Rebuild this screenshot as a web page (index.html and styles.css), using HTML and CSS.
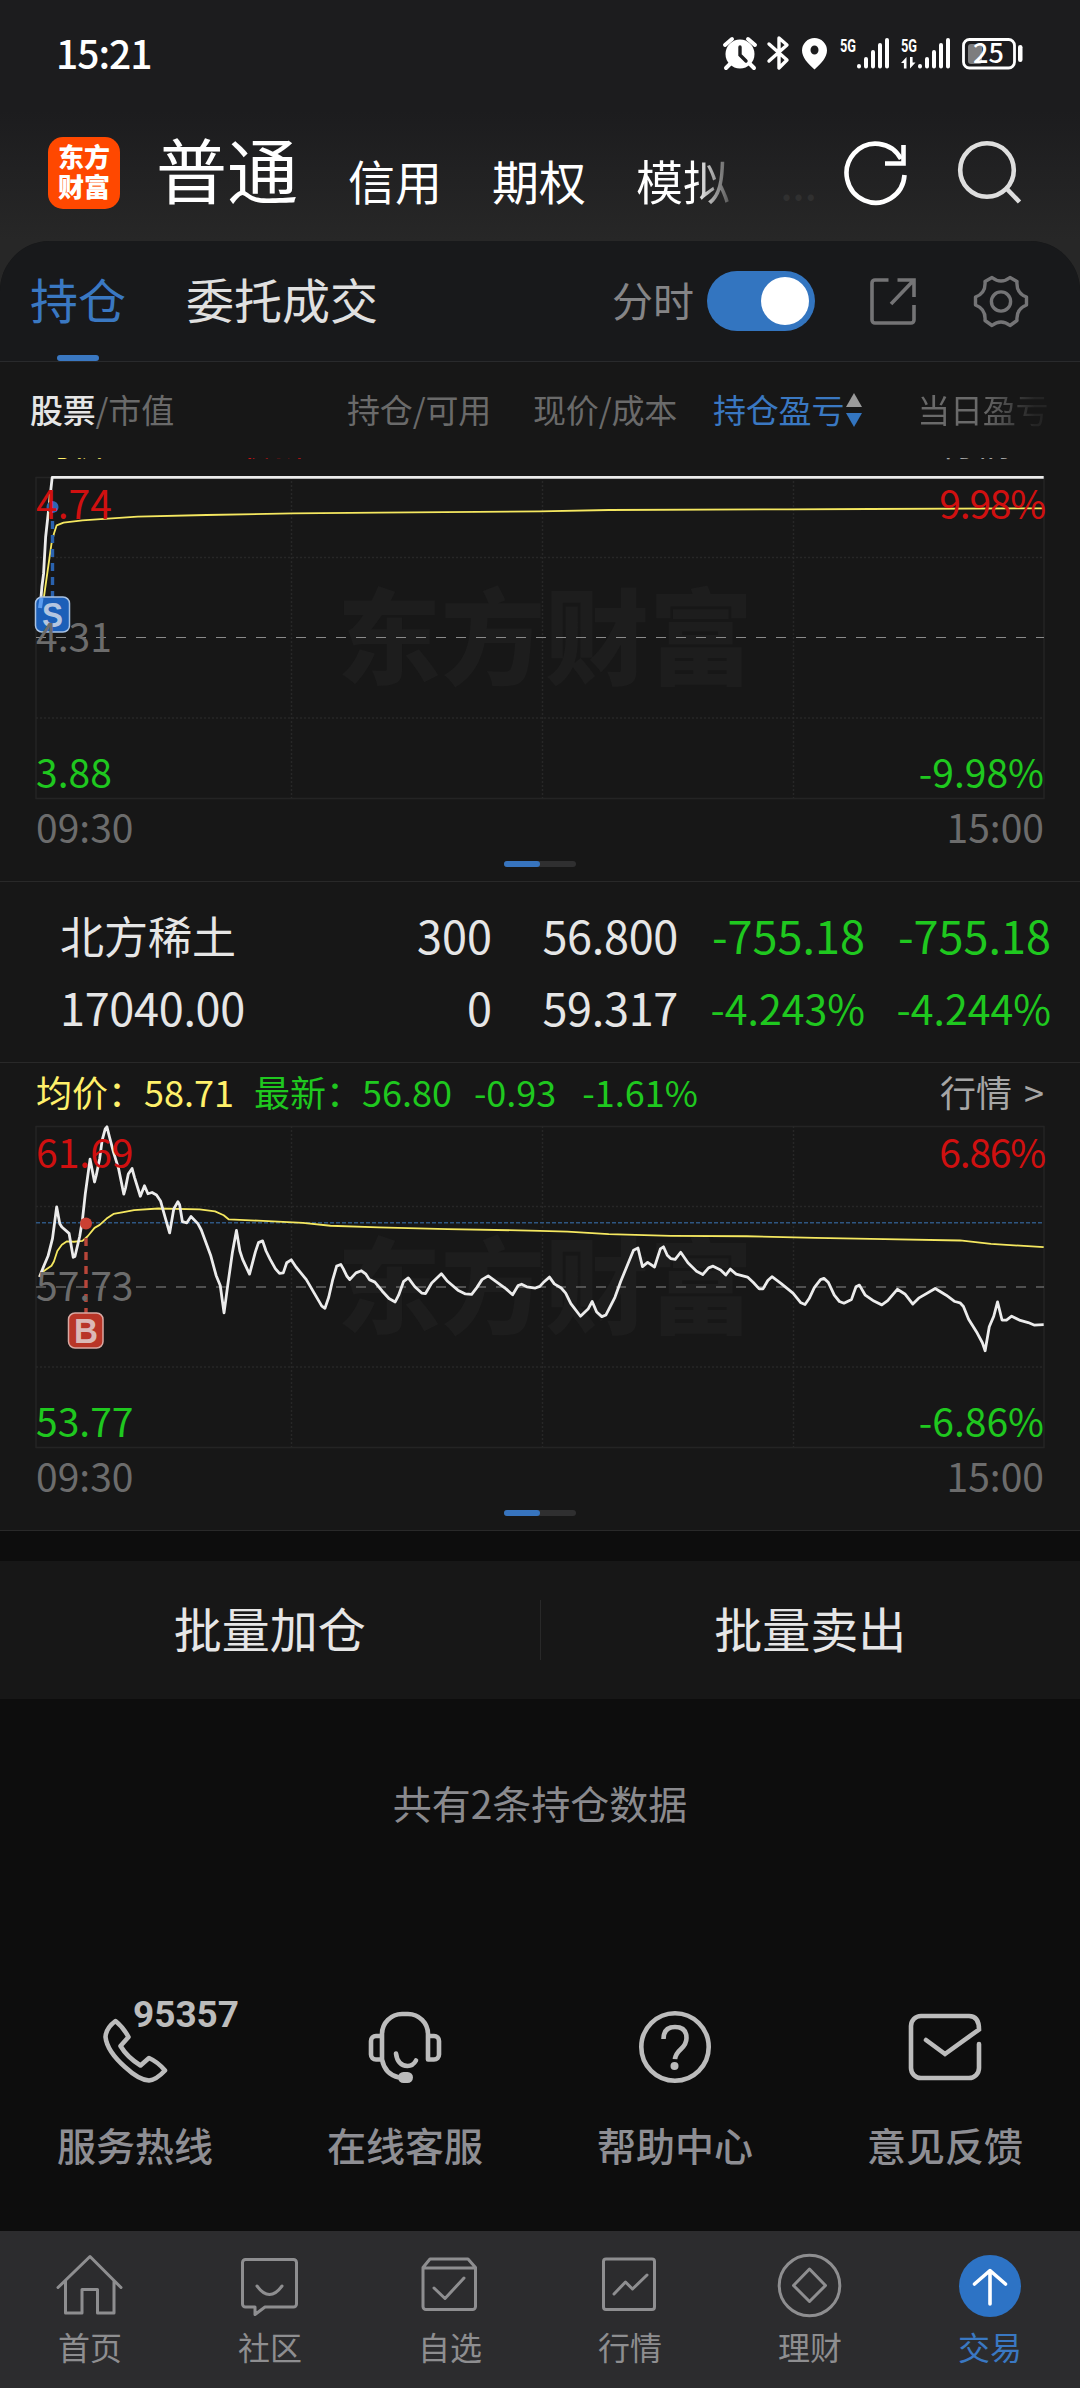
FILE: index.html
```html
<!DOCTYPE html>
<html lang="zh-CN">
<head>
<meta charset="utf-8">
<title>交易</title>
<link rel="stylesheet" href="styles.css">
</head>
<body>
<div class="app">
  <header class="top">
    <div class="status">
      <span class="clock">15:21</span>
      <svg class="status-icons" width="304" height="40" viewBox="720 33 304 40" fill="#fff">
        <circle cx="740" cy="54" r="14.5"/>
        <path d="M725 45l7-6M755 45l-7-6M730 64l-4 4M750 64l4 4" stroke="#fff" stroke-width="4" stroke-linecap="round"/>
        <path d="M740 47v8l6 6" fill="none" stroke="#1d1d1f" stroke-width="3.4" stroke-linecap="round"/>
        <path d="M769 44l18 16-8 8V38l8 7-18 16" fill="none" stroke="#fff" stroke-width="3.4" stroke-linejoin="round" stroke-linecap="round"/>
        <path fill-rule="evenodd" d="M814.500 38a12.500 12.500 0 0 1 12.500 12.500c0 7-6 13-12.500 19-6.500-6-12.500-12-12.500-19A12.500 12.500 0 0 1 814.500 38zm0 7.500a4 4.500 0 1 0 0 9 4 4.500 0 0 0 0-9z"/>
        <text x="840" y="51.500" class="net" textLength="16" lengthAdjust="spacingAndGlyphs">5G</text>
        <text x="901" y="51.500" class="net" textLength="16" lengthAdjust="spacingAndGlyphs">5G</text>
        <path d="M859 66v.5M866 59v7.500M873 52v14.500M880 45v21.500M887 40v26.500M920 66v.5M927 59v7.500M934 52v14.500M941 45v21.500M948 40v26.500" stroke="#fff" stroke-width="4" stroke-linecap="round"/>
        <path d="M901 63l5.500-6v11.500h-2.600V63zM915.500 62.500l-5.500 6V57h2.600v5.500z"/>
        <rect x="963.500" y="39.500" width="51" height="28.500" rx="6" fill="none" stroke="#fff" stroke-width="2.800"/>
        <rect x="968" y="44" width="14" height="20" rx="3" fill="#7d7d7e"/>
        <rect x="1018" y="45" width="4.500" height="17" rx="2.200"/>
        <text x="988.500" y="62.500" class="batt" text-anchor="middle">25</text>
      </svg>
    </div>
    <div class="brand-row">
      <div class="logo"><span>东方</span><span>财富</span></div>
      <nav class="markets">
        <span class="market active">普通</span>
        <span class="market">信用</span>
        <span class="market">期权</span>
        <span class="market fade">模拟</span>
        <span class="more">...</span>
      </nav>
      <svg class="refresh" width="66" height="66" viewBox="843 141 66 66" fill="none" stroke="#fff" stroke-width="4.600">
        <path d="M904.500 175A29 29.500 0 1 1 901 159"/>
        <path d="M903.500 145v18.500H885"/>
      </svg>
      <svg class="search" width="66" height="66" viewBox="957 139 66 66" fill="none" stroke="#dedede" stroke-width="4.600">
        <circle cx="987" cy="170" r="26.800"/>
        <path d="M1006 188l13.500 14"/>
      </svg>
    </div>
  </header>

  <main class="panel">
    <div class="tabs">
      <span class="tab on">持仓</span>
      <span class="tab">委托成交</span>
      <span class="switch-label">分时</span>
      <span class="switch"></span>
      <svg class="share" width="48" height="48" viewBox="870 277 48 48" fill="none" stroke="#747476" stroke-width="3.600">
        <path d="M889.500 280H876a3 3 0 0 0-3 3v37a3 3 0 0 0 3 3h36a3 3 0 0 0 3-3v-15"/>
        <path d="M898.500 280H915v17M915 280l-23 24"/>
      </svg>
      <svg class="gear" width="58" height="58" viewBox="973 272 58 58" fill="none" stroke="#747476" stroke-width="3.400" stroke-linejoin="round">
        <path d="M993 277.500Q1002 284.500 1011 277.500L1018 281.500Q1017 293 1027.500 297V305Q1017 309 1018 320.500L1011 325.500Q1002 318.500 993 325.500L986 320.500Q987 309 976.500 305V297Q987 293 986 281.500Z"/>
        <circle cx="1002" cy="301.500" r="9.600"/>
      </svg>
    </div>

    <div class="columns">
      <span class="c1"><b>股票</b>/市值</span>
      <span class="c2">持仓/可用</span>
      <span class="c3">现价/成本</span>
      <span class="c4">持仓盈亏</span>
      <svg class="sort" width="18" height="36" viewBox="0 0 18 36"><path d="M1 15L9 1l8 14z" fill="#9a9a9a"/><path d="M1 21h16L9 35z" fill="#3375c0"/></svg>
      <span class="c5">当日盈亏</span>
    </div>

    <div class="list">
      <section class="holding scrolled">
        <div class="quote">
          <span class="avg">均价：4.66</span><span class="last up">最新：4.74</span><span class="chg up">0.43</span><span class="pct up">9.98%</span>
          <span class="go">行情 &gt;</span>
        </div>
        <div class="chart">
          <svg class="plot" width="1010" height="324" viewBox="-1 -1 1010 324">
            <g class="grid">
              <path class="frame" d="M0 .5H1008V321.500H0z"/>
              <path class="dots" d="M0 80.500H1008M0 241H1008M255.500 0V321M506.500 0V321M757.500 0V321"/>
            </g>
            <text class="mark" x="301" y="200">东方财富</text>
            <path class="mid" d="M0 160.500H1008"/>
            <g class="series" transform="scale(.34439 .33333) translate(-105 -110)">
              <polyline class="price" points="117,505 122,440 127,400 133,290 152,111 3031,111"/>
              <polyline class="mean" points="128,470 150,310 157,280 165,255 185,247 240,240 400,229 600,224 850,219 1100,217 1568,213 1768,209 2288,207 2528,206 3031,204"/>
            </g>
            <circle cx="16.500" cy="30" r="6" fill="#2f66b4"/>
            <path d="M16.500 44V120" stroke="#2a62ae" stroke-width="3.400" stroke-dasharray="8 6"/>
            <rect x="-.5" y="120" width="34" height="35" rx="6.500" fill="#1c5fb8" stroke="#a9c2e2" stroke-width="1.500"/>
            <path d="M4 131l1.500-10" stroke="#5a9cf0" stroke-width="4"/>
            <text class="badge sell" x="16.500" y="150" text-anchor="middle" textLength="21" lengthAdjust="spacingAndGlyphs">S</text>
          </svg>
          <span class="lab hi l">4.74</span><span class="lab hi r">9.98%</span>
          <span class="lab md l">4.31</span>
          <span class="lab lo l">3.88</span><span class="lab lo r">-9.98%</span>
        </div>
        <div class="times"><span>09:30</span><span>15:00</span></div>
        <div class="pager"><i></i></div>
      </section>

      <section class="row">
        <div class="line"><span class="c1">北方稀土</span><span class="c2">300</span><span class="c3">56.800</span><span class="c4 down">-755.18</span><span class="c5 down">-755.18</span></div>
        <div class="line"><span class="c1 num">17040.00</span><span class="c2">0</span><span class="c3">59.317</span><span class="c4 down pc">-4.243%</span><span class="c5 down pc">-4.244%</span></div>
      </section>

      <section class="holding">
        <div class="quote">
          <span class="avg">均价：58.71</span><span class="last down">最新：56.80</span><span class="chg down">-0.93</span><span class="pct down">-1.61%</span>
          <span class="go">行情 &gt;</span>
        </div>
        <div class="chart">
          <svg class="plot" width="1010" height="324" viewBox="-1 -1 1010 324">
            <g class="grid">
              <path class="frame" d="M0 .5H1008V321.500H0z"/>
              <path class="dots" d="M0 80.500H1008M0 241H1008M255.500 0V321M506.500 0V321M757.500 0V321"/>
            </g>
            <text class="mark" x="301" y="200">东方财富</text>
            <path class="mid" d="M0 161H1008"/>
            <path class="cost" d="M0 96.800H1008"/>
            <g class="series" transform="scale(.34439 .42088) translate(-105 -583)">
              <polyline class="mean" points="120,932 150,915 157,905 167,880 180,865 195,857 215,858 240,856 255,845 275,825 290,818 310,803 330,792 355,788 390,783 460,779 580,781 625,786 650,795 665,805 750,808 880,813 960,820 1100,824 1300,828 1568,832 1648,834 1768,840 1948,844 2168,845 2368,849 2568,852 2788,855 2878,863 3031,871"/>
              <polyline class="price" points="115,942 128,915 140,892 153,850 161,800 165,775 174,815 180,823 201,838 213,895 218,893 232,845 240,805 248,745 262,662 275,716 280,700 290,660 297,617 306,590 311,585 318,608 330,645 345,685 360,745 365,730 373,697 384,684 391,705 408,750 420,725 430,744 442,741 455,747 467,762 480,800 493,837 505,780 517,763 522,770 530,810 543,813 555,798 575,815 585,830 612,890 628,938 640,962 651,1027 662,960 675,885 687,831 697,880 705,900 725,935 742,882 751,860 763,856 773,880 785,900 800,922 812,933 823,932 833,908 846,901 860,918 890,948 915,983 935,1011 944,1016 955,990 966,950 978,916 990,912 997,922 1008,940 1016,948 1034,932 1050,927 1063,935 1073,948 1089,954 1110,975 1130,993 1148,1001 1158,985 1172,953 1186,944 1205,965 1225,980 1236,981 1254,956 1282,934 1300,952 1330,973 1352,982 1370,983 1385,967 1400,948 1418,939 1445,955 1470,970 1489,984 1505,962 1515,959 1530,965 1555,968 1568,964 1578,955 1596,942 1610,958 1630,968 1643,980 1658,1005 1686,1035 1708,1018 1720,1000 1733,1025 1748,1036 1760,1032 1786,990 1803,952 1823,912 1840,878 1853,873 1866,917 1881,907 1901,918 1918,875 1927,870 1938,890 1948,898 1961,900 1977,883 1998,908 2023,928 2041,936 2058,920 2071,916 2093,925 2108,937 2121,923 2138,935 2171,942 2188,955 2205,970 2216,970 2230,950 2242,941 2268,957 2303,980 2326,1003 2338,1007 2350,993 2365,967 2383,948 2393,945 2406,955 2423,985 2438,1000 2451,1004 2473,995 2486,965 2496,961 2513,985 2538,999 2561,1008 2578,998 2606,971 2628,982 2651,1006 2668,992 2716,969 2748,985 2773,1000 2788,1003 2798,1012 2813,1042 2838,1075 2853,1098 2861,1117 2873,1060 2886,1035 2897,1001 2910,1044 2923,1044 2938,1035 2963,1045 2986,1050 3003,1056 3031,1055"/>
            </g>
            <circle cx="50" cy="97.500" r="6" fill="#cb4033"/>
            <path d="M50 112V187" stroke="#b8463a" stroke-width="3.400" stroke-dasharray="8 6"/>
            <rect x="32.500" y="187" width="34.500" height="35" rx="6.500" fill="#b93527" stroke="#d9a8a2" stroke-width="1.500"/>
            <text class="badge buy" x="50" y="217" text-anchor="middle" textLength="24" lengthAdjust="spacingAndGlyphs">B</text>
          </svg>
          <span class="lab hi l">61.69</span><span class="lab hi r">6.86%</span>
          <span class="lab md l">57.73</span>
          <span class="lab lo l">53.77</span><span class="lab lo r">-6.86%</span>
        </div>
        <div class="times"><span>09:30</span><span>15:00</span></div>
        <div class="pager"><i></i></div>
      </section>
    </div>
  </main>

  <div class="batch"><span>批量加仓</span><i></i><span>批量卖出</span></div>
  <p class="count">共有2条持仓数据</p>

  <div class="services">
    <div class="service">
      <svg width="150" height="90" viewBox="95 1996 150 90" fill="none" stroke="#bcbcbc" stroke-width="4.600" stroke-linejoin="round">
        <path d="M115.500 2021Q106 2028 105.500 2037Q107 2051 125 2067Q139 2080 149 2080.500Q156 2080 165 2070.500Q158 2062 149 2058L140.500 2065.500Q127 2057 120.500 2046L128.500 2037Q123 2027 115.500 2021Z"/>
        <text class="hot" x="133" y="2026.500" textLength="106" lengthAdjust="spacing">95357</text>
      </svg>
      <span>服务热线</span>
    </div>
    <div class="service">
      <svg width="150" height="90" viewBox="330 1996 150 90" fill="none" stroke="#bcbcbc" stroke-width="4.600" stroke-linejoin="round">
        <path d="M382 2059.500V2034a20 20 0 0 1 20-20h6a20 20 0 0 1 20 20v25.500h6a5 5 0 0 0 5-5V2041a5 5 0 0 0-5-5h-6M382 2036h-6a5 5 0 0 0-5 5v13.500a5 5 0 0 0 5 5h6q3 15 17 18"/>
        <path d="M396 2053.500q1.500 12 11.500 12.500q5.500 0 8.500-5.500" stroke-linecap="round"/>
        <rect x="398" y="2072" width="15" height="11" rx="5.500" fill="#bcbcbc" stroke="none"/>
      </svg>
      <span>在线客服</span>
    </div>
    <div class="service">
      <svg width="150" height="90" viewBox="600 1996 150 90" fill="none" stroke="#bcbcbc" stroke-width="4.600">
        <circle cx="675" cy="2047" r="33.700"/>
        <path d="M663.500 2039q0-12 11.500-12t11.500 11q0 6-5.500 11t-6 10v-1.500"/>
        <circle cx="674.500" cy="2066" r="4" fill="#bcbcbc" stroke="none"/>
      </svg>
      <span>帮助中心</span>
    </div>
    <div class="service">
      <svg width="150" height="90" viewBox="870 1996 150 90" fill="none" stroke="#bcbcbc" stroke-width="4.600" stroke-linecap="round">
        <path d="M979 2044v24a10 10 0 0 1-10 10h-48a10 10 0 0 1-10-10v-42a10 10 0 0 1 10-10h48q10 0 10 13.500l-34 24.500-19-14"/>
      </svg>
      <span>意见反馈</span>
    </div>
  </div>

  <nav class="bottom">
    <div class="item">
      <svg width="70" height="66" viewBox="55 2253 70 66"><path d="M58 2287.500l32-31 31 31M65.500 2281v32h16.500v-23.500h15.500V2313H114v-32"/></svg>
      <span>首页</span>
    </div>
    <div class="item">
      <svg width="70" height="66" viewBox="235 2253 70 66"><path d="M245.500 2259.500h48a3 3 0 0 1 3 3v41.500a3 3 0 0 1-3 3H265l-10 7.500v-7.500h-9.500a3 3 0 0 1-3-3v-41.500a3 3 0 0 1 3-3zM257 2286q12.500 17 25 0"/></svg>
      <span>社区</span>
    </div>
    <div class="item">
      <svg width="70" height="66" viewBox="415 2253 70 66"><path d="M423 2267.500l7-8.500h38l7.500 8.500v39a3 3 0 0 1-3 3H426a3 3 0 0 1-3-3zM423 2268h52.500M434 2288l11 10.500 19-20.500"/></svg>
      <span>自选</span>
    </div>
    <div class="item">
      <svg width="70" height="66" viewBox="595 2253 70 66"><rect x="603.500" y="2259" width="51" height="50.500" rx="2.500"/><path d="M614 2294l11.500-12 7 7 14.500-14"/></svg>
      <span>行情</span>
    </div>
    <div class="item">
      <svg width="70" height="66" viewBox="775 2253 70 66"><circle cx="809.500" cy="2285.500" r="30.300"/><path d="M809.500 2269l16 16.500-16 16-16-16z"/></svg>
      <span>理财</span>
    </div>
    <div class="item on">
      <svg width="70" height="66" viewBox="955 2253 70 66"><circle cx="990" cy="2286" r="31" fill="#2d73c5" stroke="none"/><path d="M990 2304v-33M974.500 2284l15.500-13.500 15.500 13.500" stroke="#fff" stroke-width="3.600"/></svg>
      <span>交易</span>
    </div>
  </nav>
</div>
</body>
</html>
```

FILE: styles.css
```css
* { box-sizing: border-box; }

body {
  margin: 0;
  background: #0d0d0d;
  color: #e6e6e6;
  font-family: "Noto Sans CJK SC", "Noto Sans", sans-serif;
}

.app {
  width: 1080px;
  height: 2388px;
  display: flex;
  flex-direction: column;
  overflow: hidden;
  white-space: nowrap;
  background: linear-gradient(#1c1c1e 110px, #272727 240px, #272727 300px, #0d0d0d 300px);
}

svg { display: block; flex: none; }

/* Status bar and market switcher */
.top { height: 241px; flex: none; }

.status {
  height: 108px;
  padding: 0 56px;
  display: flex;
  align-items: center;
  justify-content: space-between;
}

.clock {
  font-size: 39px;
  font-weight: 500;
  line-height: 48px;
  color: #fff;
  margin-top: -5px;
  letter-spacing: -1px;
}

.status-icons { margin-top: -2px; }

.net { font: 700 19px "Roboto", sans-serif; }
.batt { font: 500 27px "Noto Sans CJK SC", sans-serif; }

.brand-row {
  height: 133px;
  padding-left: 48px;
  display: flex;
}

.logo {
  width: 72px;
  height: 72px;
  margin-top: 29px;
  border-radius: 15px;
  background: #ff4800;
  color: #fff;
  font-size: 26px;
  font-weight: 900;
  line-height: 30px;
  padding-top: 4px;
  display: flex;
  flex-direction: column;
  align-items: center;
}

.markets {
  width: 687px;
  margin-left: 36px;
  display: flex;
  align-items: flex-start;
  gap: 50px;
  color: #fff;
  overflow: hidden;
}

.market { font-size: 47px; line-height: 71px; margin-top: 36px; }
.market.active { font-size: 71px; line-height: 119px; margin-top: 0; }
.market.fade {
  background: linear-gradient(90deg, #fff 62%, #555 100%);
  -webkit-background-clip: text;
  background-clip: text;
  color: transparent;
}
.more { font-size: 47px; letter-spacing: -1px; line-height: 71px; margin-top: 36px; color: #303030; }

.refresh { margin-top: 33px; }
.search { margin: 31px 0 0 48px; }

/* Panel tabs */
.panel {
  height: 1290px;
  flex: none;
  background: #171717;
  border-radius: 50px 50px 0 0;
}

.tabs {
  height: 121px;
  padding-left: 30px;
  display: flex;
  align-items: center;
  background: #18191b;
  border-bottom: 1px solid #292a2c;
  border-radius: 50px 50px 0 0;
}

.tab {
  position: relative;
  margin-right: 60px;
  font-size: 48px;
  line-height: 120px;
  height: 120px;
  margin-top: -6px;
  color: #e0e0e0;
}
.tab.on { color: #3a78c2; }
.tab.on::after {
  content: "";
  position: absolute;
  left: 27px;
  bottom: -3px;
  width: 42px;
  height: 6px;
  border-radius: 3px;
  background: #3a78c2;
}

.switch-label {
  margin: -5px 13px 0 174px;
  font-size: 41px;
  line-height: 60px;
  color: #858587;
}

.switch {
  width: 108px;
  height: 60px;
  padding: 6px;
  border-radius: 30px;
  background: #3375c0;
  display: flex;
  justify-content: flex-end;
}
.switch::after {
  content: "";
  width: 48px;
  height: 48px;
  border-radius: 50%;
  background: #fff;
}

.share { margin-left: 54px; }
.gear { margin-left: 55px; }

/* Column headings */
.columns {
  height: 96px;
  padding: 0 0 2px 30px;
  display: flex;
  align-items: center;
  font-size: 33px;
  letter-spacing: -.2px;
  color: #6a6a6a;
}
.columns b { font-weight: 500; color: #e6e6e6; }
.columns .c2 { width: 317px; text-align: right; }
.columns .c3 { width: 186px; text-align: right; }
.columns .c4 { margin-left: 36px; color: #3a78c2; }
.columns .c1 { width: 144px; }
.columns .sort { margin: 2px 0 0 1px; }
.columns .c5 {
  margin-left: 54px;
  background: linear-gradient(90deg, #6a6a6a 50%, #242424 90%);
  -webkit-background-clip: text;
  background-clip: text;
  color: transparent;
}

/* Holdings */
.list { height: 1073px; overflow: hidden; }

.holding {
  height: 468px;
  border-bottom: 1px solid #292929;
  padding: 0 36px;
}
.holding.scrolled { margin-top: -44px; }

.quote {
  height: 63px;
  display: flex;
  font-size: 36px;
  line-height: 56px;
}
.scrolled .quote { line-height: 52px; }
.avg { color: #fff06a; }
.last { margin-left: 20px; }
.chg { margin-left: 22px; }
.chg.up { margin-left: 24px; }
.pct { margin-left: 26px; }
.go { margin-left: auto; color: #a6a6a6; word-spacing: 4px; }
.down { color: #1fc81f; }
.up { color: #c41414; }

.chart { position: relative; height: 322px; }
.plot { position: absolute; left: -1px; top: -1px; overflow: visible; }
.frame { fill: none; stroke: #242424; stroke-width: 1.500; }
.dots { stroke: #272727; stroke-width: 1.500; stroke-dasharray: 2 2; }
.mark { font-size: 104px; font-weight: 900; fill: #1d1d1d; }
.mid { stroke: #8a8a8a; stroke-width: 1.200; stroke-dasharray: 10 10; }
.cost { stroke: #2e5682; stroke-width: 1.500; stroke-dasharray: 4 2; }
.series polyline { fill: none; stroke-linejoin: round; vector-effect: non-scaling-stroke; }
.price { stroke: #ececec; stroke-width: 2.800; }
.mean { stroke: #f5e860; stroke-width: 1.800; }
.badge { font: 700 35px "Liberation Sans", sans-serif; }
.sell { fill: #b4c6e0; }
.buy { fill: #dbb9b6; }

.lab {
  position: absolute;
  font-size: 39px;
  line-height: 40px;
}
.l { left: 0; }
.r { right: 0; }
.hi { top: 5px; color: #d01010; }
.hi.r { letter-spacing: -1.2px; right: -1px; }
.md { top: 138px; color: #6c6c6c; }
.lo { top: 274px; color: #1fc81f; }

.times {
  height: 60px;
  display: flex;
  justify-content: space-between;
  font-size: 39px;
  line-height: 55px;
  color: #6c6c6c;
}

.pager {
  width: 72px;
  height: 6px;
  margin: 2px auto 0;
  border-radius: 3px;
  background: #2f2f30;
}
.pager i {
  display: block;
  width: 36px;
  height: 6px;
  border-radius: 3px;
  background: #3774be;
}

.row {
  height: 181px;
  padding: 17px 0 0 60px;
  border-bottom: 1px solid #292929;
}
.line {
  display: flex;
  height: 72px;
  font-size: 45px;
  line-height: 72px;
}
.line .c1 { width: 180px; font-size: 44px; }
.line .c1.num { font-size: 45px; letter-spacing: -.3px; }
.line .c2 { width: 252px; text-align: right; }
.line .c3 { width: 186px; text-align: right; letter-spacing: -.3px; }
.line .c4 { width: 187px; text-align: right; }
.line .c5 { width: 186px; text-align: right; }
.line .pc { font-size: 41px; }

/* Batch actions */
.batch {
  height: 138px;
  margin-top: 30px;
  flex: none;
  display: flex;
  align-items: center;
  background: #171717;
  font-size: 48px;
}
.batch span { flex: 1; text-align: center; line-height: 138px; margin-top: -6px; }
.batch i { width: 1px; height: 60px; background: #292929; }

.count {
  margin: 73px 0 0;
  text-align: center;
  font-size: 39px;
  line-height: 60px;
  color: #8a8a8e;
}

.services {
  margin-top: 164px;
  display: grid;
  grid-template-columns: repeat(4, 270px);
  flex: none;
}
.service {
  display: flex;
  flex-direction: column;
  align-items: center;
  gap: 28px;
  font-size: 39px;
  line-height: 60px;
  color: #8e8e93;
}
.service span { font-weight: 500; }
.service:first-child svg { margin-left: 70px; }
.hot { font: 700 37px "Roboto", sans-serif; fill: #bcbcbc; stroke: none; }

/* Bottom navigation */
.bottom {
  height: 157px;
  margin-top: auto;
  flex: none;
  padding-top: 22px;
  display: grid;
  grid-template-columns: repeat(6, 180px);
  background: #2c2c2e;
}
.item {
  display: flex;
  flex-direction: column;
  align-items: center;
  font-size: 32px;
  line-height: 54px;
  color: #8e8e90;
}
.item svg { fill: none; stroke: #8e8e90; stroke-width: 3; stroke-linejoin: round; stroke-linecap: round; }
.item.on { color: #3a78c2; }
```
